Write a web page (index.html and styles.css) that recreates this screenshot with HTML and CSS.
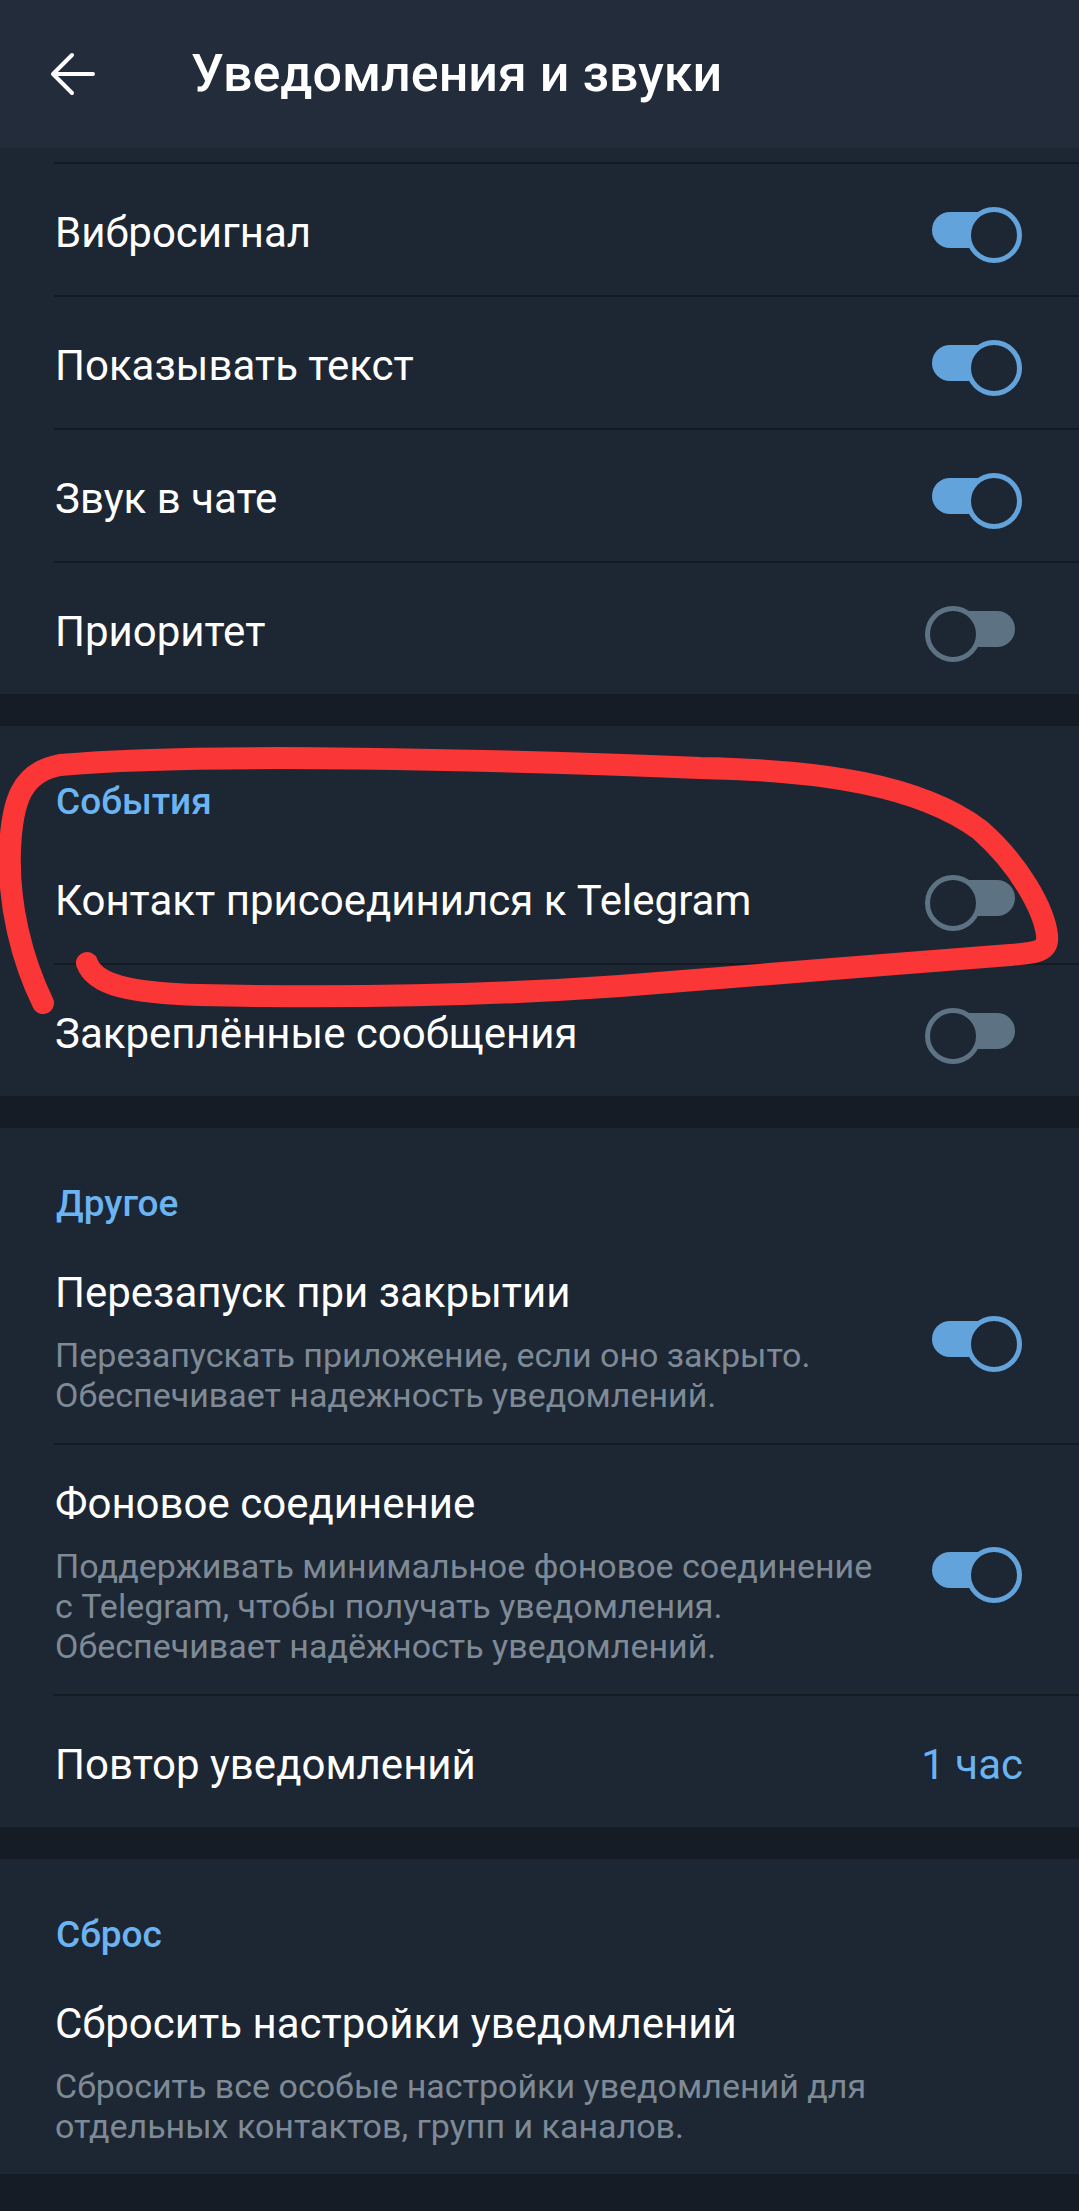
FILE: index.html
```html
<!DOCTYPE html>
<html lang="ru">
<head>
  <meta charset="UTF-8" />
  <meta name="viewport" content="width=device-width, initial-scale=1.0"/>
  <title>Уведомления и звуки</title>
  <link rel="stylesheet" href="styles.css">
</head>
<body>
  <div class="topbar">
    <svg class="back" width="46" height="44" viewBox="0 0 46 44">
      <path d="M4 22 H43 M22 3 L3 22 L22 41" fill="none" stroke="#fff" stroke-width="4" stroke-linecap="round" stroke-linejoin="round"/>
    </svg>
    <h1>Уведомления и звуки</h1>
  </div>

  <div class="section section-cut">
    <div class="row">
      <span class="row-title">Вибросигнал</span>
      <span class="switch on"></span>
    </div>
    <div class="row">
      <span class="row-title">Показывать текст</span>
      <span class="switch on"></span>
    </div>
    <div class="row">
      <span class="row-title">Звук в чате</span>
      <span class="switch on"></span>
    </div>
    <div class="row">
      <span class="row-title">Приоритет</span>
      <span class="switch"></span>
    </div>
  </div>

  <div class="section">
    <div class="section-header">События</div>
    <div class="row">
      <span class="row-title">Контакт присоединился к Telegram</span>
      <span class="switch"></span>
    </div>
    <div class="row">
      <span class="row-title">Закреплённые сообщения</span>
      <span class="switch"></span>
    </div>
  </div>

  <div class="section">
    <div class="section-header">Другое</div>
    <div class="row multi">
      <div class="row-text">
        <div class="row-name">Перезапуск при закрытии</div>
        <div class="row-sub">Перезапускать приложение, если оно закрыто.<br>Обеспечивает надежность уведомлений.</div>
      </div>
      <span class="switch on"></span>
    </div>
    <div class="row multi">
      <div class="row-text">
        <div class="row-name">Фоновое соединение</div>
        <div class="row-sub">Поддерживать минимальное фоновое соединение<br>с Telegram, чтобы получать уведомления.<br>Обеспечивает надёжность уведомлений.</div>
      </div>
      <span class="switch on"></span>
    </div>
    <div class="row">
      <span class="row-title">Повтор уведомлений</span>
      <span class="row-value">1 час</span>
    </div>
  </div>

  <div class="section">
    <div class="section-header">Сброс</div>
    <div class="row multi">
      <div class="row-text">
        <div class="row-name">Сбросить настройки уведомлений</div>
        <div class="row-sub">Сбросить все особые настройки уведомлений для<br>отдельных контактов, групп и каналов.</div>
      </div>
    </div>
  </div>

  <!-- red marker drawn over the screenshot -->
  <svg class="marker" width="1079" height="2211" viewBox="0 0 1079 2211">
    <path d="M43 1003 C22 960 8 905 10 850 C12 800 22 772 60 765 C200 752 500 760 700 768 C820 770 920 785 980 830 C1020 865 1044 910 1047 935 C1049 952 1035 953 1010 955 C880 965 760 975 620 986 C480 996 330 998 200 995 C130 993 95 985 87 963" fill="none" stroke="#fb3636" stroke-width="22" stroke-linecap="round" stroke-linejoin="round"/>
  </svg>
</body>
</html>
```

FILE: styles.css
```css
* {
  margin: 0;
  padding: 0;
  box-sizing: border-box;
}

body {
  font-family: Roboto, 'Noto Sans', sans-serif;
  background: #151c25;
  color: #ffffff;
  width: 1079px;
  min-height: 2211px;
  position: relative;
  overflow: hidden;
}

.topbar {
  height: 148px;
  background: #222c3a;
  display: flex;
  align-items: center;
  padding-left: 50px;
}

.back {
  flex-shrink: 0;
}

.topbar h1 {
  margin-left: 95px;
  font-size: 52px;
  font-weight: 500;
  line-height: 62px;
  color: #ffffff;
}

.section {
  background: #1d2633;
}

.section + .section {
  margin-top: 32px;
}

.section-cut {
  padding-top: 14px;
}

.section-header {
  height: 106px;
  padding: 54px 0 0 56px;
  font-size: 37px;
  font-weight: 500;
  line-height: 44px;
  color: #6cb3f1;
}

.row {
  display: flex;
  align-items: center;
  justify-content: space-between;
  min-height: 131px;
  margin-left: 54px;
  padding: 0 56px 0 1px;
}

.row + .row,
.section-cut .row:first-child {
  border-top: 2px solid #141a22;
  min-height: 133px;
}

.row-title {
  padding-top: 6px;
  font-size: 42px;
  line-height: 49px;
}

.row-text {
  padding: 34px 0 28px;
}

.row-name {
  font-size: 42px;
  line-height: 49px;
  margin-bottom: 18px;
}

.row-sub {
  font-size: 34px;
  line-height: 40px;
  color: #7e8a96;
}

.row-value {
  padding-top: 6px;
  font-size: 42px;
  line-height: 49px;
  color: #6cb3f1;
}

/* toggle */
.switch {
  position: relative;
  flex-shrink: 0;
  width: 83px;
  height: 36px;
  margin-right: 8px;
  margin-left: 40px;
  border-radius: 18px;
  background: #5d7384;
}

.switch::after {
  content: '';
  position: absolute;
  top: -5px;
  left: -7px;
  width: 46px;
  height: 46px;
  border-radius: 50%;
  border: 5px solid #5d7384;
  background: #1d2633;
}

.switch.on {
  background: #62a3db;
}

.switch.on::after {
  left: auto;
  right: -7px;
  border-color: #62a3db;
}

.marker {
  position: absolute;
  top: 0;
  left: 0;
  pointer-events: none;
}
```
